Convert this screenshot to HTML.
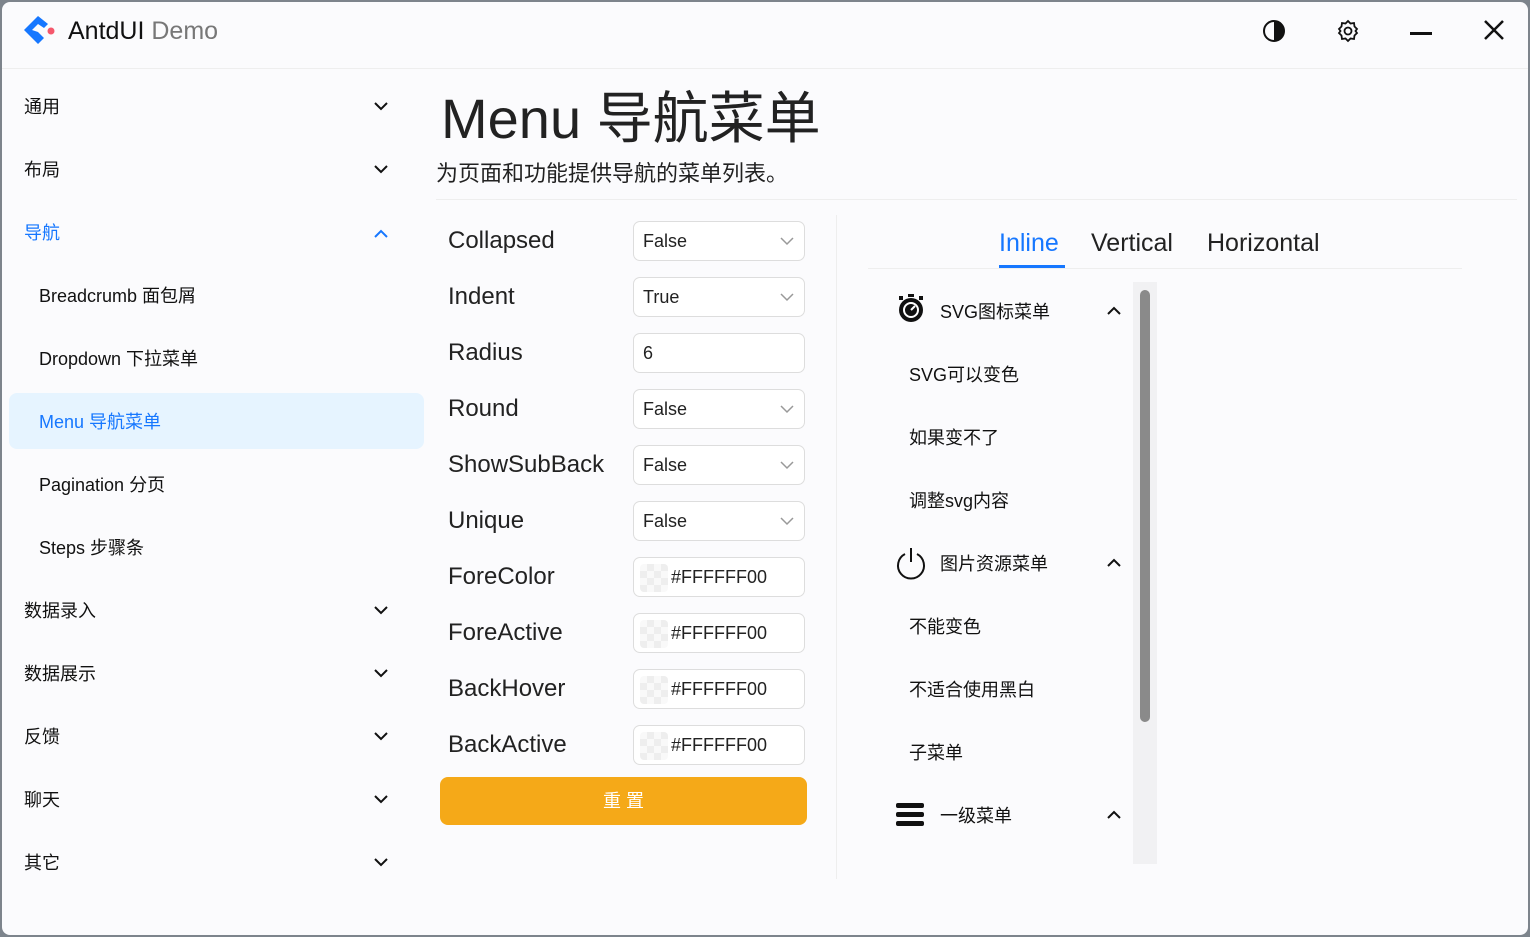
<!DOCTYPE html><html><head><meta charset="utf-8"><style>
*{margin:0;padding:0;box-sizing:border-box}
body{width:1530px;height:937px;background:#7d848c;font-family:"Liberation Sans","Noto Sans CJK SC",sans-serif;overflow:hidden;position:relative}
.win{position:absolute;left:2px;top:2px;width:1526px;height:933px;background:#fbfbfd;border-radius:8px;overflow:hidden}
.a{position:absolute;white-space:nowrap}
.nav{font-size:18px;color:#111}
.lab{font-size:24px;color:#222;left:446px}
.inp{position:absolute;left:631px;width:172px;height:40px;border:1px solid #ddd;border-radius:7px;background:#fff;font-size:18px;color:#222;padding:9px 9px}
.chk{position:absolute;left:6px;top:6px;width:28px;height:28px;background:conic-gradient(#eee 25%,#f9f9f9 0 50%,#eee 0 75%,#f9f9f9 0);background-size:14px 14px;border-radius:4px}
.mi{font-size:18px;color:#111}
</style></head><body><div class="win">
<svg class="a" style="left:20px;top:12px" width="36" height="36" viewBox="0 0 36 36"><path d="M16 2 L2 16 L16 30 L22 24 L16 18 L10 16 L16 10 L22 14 L26 10 Z" fill="#1677ff"/><circle cx="29" cy="17" r="3.5" fill="#f5586c"/></svg>
<div class="a" style="left:66px;top:15px;font-size:25px;color:#111">AntdUI <span style="color:#777">Demo</span></div>
<svg class="a" style="left:1260px;top:17px" width="24" height="24"><circle cx="12" cy="12" r="10" fill="none" stroke="#111" stroke-width="2"/><path d="M12 2a10 10 0 0 1 0 20z" fill="#111"/></svg>
<svg class="a" style="left:1334px;top:17px" width="24" height="24" viewBox="0 0 24 24"><path d="M12 2l2.5 2.5 3.5-.5.5 3.5L21 10l-1.5 2 1.5 2-2.5 2.5-.5 3.5-3.5-.5L12 22l-2.5-2.5-3.5.5-.5-3.5L3 14l1.5-2L3 10l2.5-2.5L6 4l3.5.5z" fill="none" stroke="#111" stroke-width="1.8"/><circle cx="12" cy="12" r="3.5" fill="none" stroke="#111" stroke-width="1.8"/></svg>
<div class="a" style="left:1408px;top:30px;width:22px;height:3px;background:#111"></div>
<svg class="a" style="left:1480px;top:16px" width="24" height="24"><path d="M3 3L21 21M21 3L3 21" stroke="#111" stroke-width="2.5"/></svg>
<div class="a" style="left:0;top:66px;width:1526px;height:1px;background:#eee"></div>
<div class="a" style="left:7px;top:391px;width:415px;height:56px;background:#e6f4ff;border-radius:8px"></div>
<div class="a nav" style="left:22px;top:91px">通用</div>
<div class="a nav" style="left:22px;top:154px">布局</div>
<div class="a nav" style="left:22px;top:217px;color:#1677ff">导航</div>
<div class="a nav" style="left:37px;top:280px">Breadcrumb 面包屑</div>
<div class="a nav" style="left:37px;top:343px">Dropdown 下拉菜单</div>
<div class="a nav" style="left:37px;top:406px;color:#1677ff">Menu 导航菜单</div>
<div class="a nav" style="left:37px;top:469px">Pagination 分页</div>
<div class="a nav" style="left:37px;top:532px">Steps 步骤条</div>
<div class="a nav" style="left:22px;top:595px">数据录入</div>
<div class="a nav" style="left:22px;top:658px">数据展示</div>
<div class="a nav" style="left:22px;top:721px">反馈</div>
<div class="a nav" style="left:22px;top:784px">聊天</div>
<div class="a nav" style="left:22px;top:847px">其它</div>
<svg class="a" style="left:371px;top:96px" width="16" height="800"><g fill="none" stroke="#111" stroke-width="2"><path d="M2 5l6 6 6-6"/><path d="M2 68l6 6 6-6"/><path d="M2 139l6-6 6 6" stroke="#1677ff"/><path d="M2 509l6 6 6-6"/><path d="M2 572l6 6 6-6"/><path d="M2 635l6 6 6-6"/><path d="M2 698l6 6 6-6"/><path d="M2 761l6 6 6-6"/></g></svg>
<div class="a" style="left:439px;top:72px;font-size:56px;color:#222">Menu 导航菜单</div>
<div class="a" style="left:434px;top:154px;font-size:22px;color:#222">为页面和功能提供导航的菜单列表。</div>
<div class="a" style="left:434px;top:197px;width:1081px;height:1px;background:#eee"></div>
<div class="a lab" style="top:225px">Collapsed</div>
<div class="a lab" style="top:281px">Indent</div>
<div class="a lab" style="top:337px">Radius</div>
<div class="a lab" style="top:393px">Round</div>
<div class="a lab" style="top:449px">ShowSubBack</div>
<div class="a lab" style="top:505px">Unique</div>
<div class="a lab" style="top:561px">ForeColor</div>
<div class="a lab" style="top:617px">ForeActive</div>
<div class="a lab" style="top:673px">BackHover</div>
<div class="a lab" style="top:729px">BackActive</div>
<div class="inp" style="top:219px">False<svg style="position:absolute;right:10px;top:14px" width="14" height="10"><path d="M1 2l6 6 6-6" fill="none" stroke="#999" stroke-width="1.5"/></svg></div>
<div class="inp" style="top:275px">True<svg style="position:absolute;right:10px;top:14px" width="14" height="10"><path d="M1 2l6 6 6-6" fill="none" stroke="#999" stroke-width="1.5"/></svg></div>
<div class="inp" style="top:331px">6</div>
<div class="inp" style="top:387px">False<svg style="position:absolute;right:10px;top:14px" width="14" height="10"><path d="M1 2l6 6 6-6" fill="none" stroke="#999" stroke-width="1.5"/></svg></div>
<div class="inp" style="top:443px">False<svg style="position:absolute;right:10px;top:14px" width="14" height="10"><path d="M1 2l6 6 6-6" fill="none" stroke="#999" stroke-width="1.5"/></svg></div>
<div class="inp" style="top:499px">False<svg style="position:absolute;right:10px;top:14px" width="14" height="10"><path d="M1 2l6 6 6-6" fill="none" stroke="#999" stroke-width="1.5"/></svg></div>
<div class="inp" style="top:555px;padding-left:37px"><div class="chk"></div>#FFFFFF00</div>
<div class="inp" style="top:611px;padding-left:37px"><div class="chk"></div>#FFFFFF00</div>
<div class="inp" style="top:667px;padding-left:37px"><div class="chk"></div>#FFFFFF00</div>
<div class="inp" style="top:723px;padding-left:37px"><div class="chk"></div>#FFFFFF00</div>
<div class="a" style="left:438px;top:775px;width:367px;height:48px;background:#f5a918;border-radius:8px;color:#fff;font-size:18px;text-align:center;line-height:48px">重 置</div>
<div class="a" style="left:834px;top:213px;width:1px;height:664px;background:#eee"></div>
<div class="a" style="left:997px;top:227px;font-size:25px;color:#1677ff">Inline</div>
<div class="a" style="left:1089px;top:227px;font-size:25px;color:#222">Vertical</div>
<div class="a" style="left:1205px;top:227px;font-size:25px;color:#222">Horizontal</div>
<div class="a" style="left:866px;top:266px;width:594px;height:1px;background:#eee"></div>
<div class="a" style="left:997px;top:263px;width:66px;height:3px;background:#1677ff"></div>
<svg class="a" style="left:894px;top:292px" width="30" height="30" viewBox="0 0 30 30"><circle cx="15" cy="16" r="12" fill="#111"/><circle cx="15" cy="16" r="7" fill="none" stroke="#fff" stroke-width="2"/><path d="M15 16l4-4" stroke="#fff" stroke-width="2"/><rect x="3" y="2" width="4" height="4" fill="#111"/><rect x="23" y="2" width="4" height="4" fill="#111"/><rect x="12" y="0" width="6" height="3" fill="#111"/></svg>
<div class="a mi" style="left:938px;top:296px">SVG图标菜单</div>
<div class="a mi" style="left:907px;top:359px">SVG可以变色</div>
<div class="a mi" style="left:907px;top:422px">如果变不了</div>
<div class="a mi" style="left:907px;top:485px">调整svg内容</div>
<svg class="a" style="left:893px;top:544px" width="32" height="34" viewBox="0 0 32 34"><path d="M10 8a13 13 0 1 0 12 0" fill="none" stroke="#111" stroke-width="2"/><path d="M16 2v14" stroke="#111" stroke-width="2"/></svg>
<div class="a mi" style="left:938px;top:548px">图片资源菜单</div>
<div class="a mi" style="left:907px;top:611px">不能变色</div>
<div class="a mi" style="left:907px;top:674px">不适合使用黑白</div>
<div class="a mi" style="left:907px;top:737px">子菜单</div>
<svg class="a" style="left:894px;top:800px" width="30" height="28"><rect y="1" width="28" height="5" rx="2" fill="#111"/><rect y="10" width="28" height="5" rx="2" fill="#111"/><rect y="19" width="28" height="5" rx="2" fill="#111"/></svg>
<div class="a mi" style="left:938px;top:800px">一级菜单</div>
<svg class="a" style="left:1104px;top:300px" width="16" height="520"><g fill="none" stroke="#111" stroke-width="2"><path d="M2 12l6-6 6 6"/><path d="M2 264l6-6 6 6"/><path d="M2 516l6-6 6 6"/></g></svg>
<div class="a" style="left:1131px;top:280px;width:24px;height:582px;background:#f1f1f3"></div>
<div class="a" style="left:1138px;top:288px;width:10px;height:432px;background:#8a8a8a;border-radius:5px"></div>
</div></body></html>
